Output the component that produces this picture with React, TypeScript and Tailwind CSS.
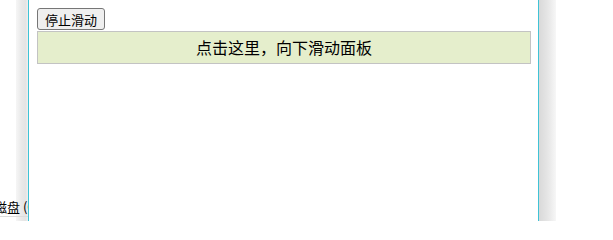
import { useState } from "react";

const cjk = { fontFamily: '"Noto Sans CJK SC", "Liberation Sans", sans-serif' };

export default function App() {
  const [open, setOpen] = useState(false);

  return (
    <div className="flex h-[221px] w-[613px] overflow-hidden bg-white" style={cjk}>
      {/* left: window behind */}
      <div className="relative h-full w-[28px] shrink-0 overflow-hidden">
        <div className="ml-[16px] h-full w-[12px] bg-[linear-gradient(to_right,#f6f6f6,#e9e9e9_45%,#e4e4e4_80%,#efefef)]" />
        <div className="absolute left-[-6px] top-[199px] whitespace-nowrap text-[13px] leading-[16px] text-black">
          磁盘 (C:)
        </div>
        <div className="absolute left-0 top-[216px] h-px w-full bg-[#dcdcdc]" />
      </div>
      <div className="h-full w-px shrink-0 bg-[#3fc3d6]" />

      {/* content frame */}
      <div className="h-full w-[509px] shrink-0 pl-[8px] pr-[7px] pt-[8px]">
        <button
          type="button"
          onClick={() => setOpen(!open)}
          className="flex h-[22px] items-center rounded-[3px] border border-[#767676] bg-[#efefef] px-[7px] text-[13px] leading-none text-black"
        >
          停止滑动
        </button>
        <div
          onClick={() => setOpen(true)}
          className="mt-px border border-[#c3c3c3] bg-[#e5eecc] py-[5px] text-center text-[16px] leading-[21px] text-black"
        >
          点击这里，向下滑动面板
        </div>
        {open && (
          <div className="border border-[#c3c3c3] bg-[#e5eecc] p-[5px] text-center text-[16px]">Hello world!</div>
        )}
      </div>

      <div className="h-full w-px shrink-0 bg-[#3fc3d6]" />
      <div className="h-full w-[17px] shrink-0 bg-[linear-gradient(to_right,#d9d9d9,#e3e3e3_40%,#ececec_70%,#f7f7f7)]" />
      <div className="h-full flex-1 bg-white" />
    </div>
  );
}
